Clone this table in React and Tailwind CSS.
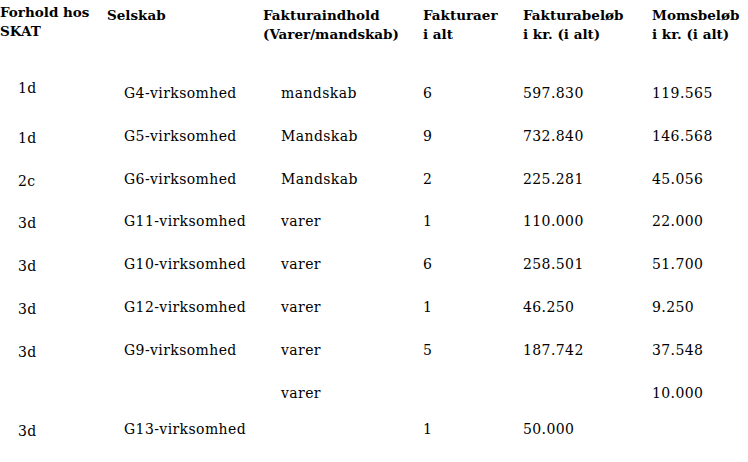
const cols = 'grid grid-cols-[107px_156px_160px_100px_129px_96px]';

const rows = [
  ['1d', 'G4-virksomhed', 'mandskab', '6', '597.830', '119.565', '-mt-[10px]'],
  ['1d', 'G5-virksomhed', 'Mandskab', '9', '732.840', '146.568', 'mt-[4px]'],
  ['2c', 'G6-virksomhed', 'Mandskab', '2', '225.281', '45.056', 'mt-[4px]'],
  ['3d', 'G11-virksomhed', 'varer', '1', '110.000', '22.000', 'mt-[4px]'],
  ['3d', 'G10-virksomhed', 'varer', '6', '258.501', '51.700', 'mt-[4px]'],
  ['3d', 'G12-virksomhed', 'varer', '1', '46.250', '9.250', 'mt-[4px]'],
  ['3d', 'G9-virksomhed', 'varer', '5', '187.742', '37.548', 'mt-[4px]'],
  ['', '', 'varer', '', '', '10.000', ''],
];

function App() {
  return (
    <div className="w-[748px] h-[462px] bg-white text-black overflow-hidden font-['DejaVu_Serif',serif] text-[14px] tracking-[0.4px]">
      <div className={`${cols} h-[72px] pt-[3px] font-bold text-[13.5px] leading-[19px] tracking-normal`}>
        <div>Forhold hos<br />SKAT</div>
        <div className="pt-[3px]">Selskab</div>
        <div className="pt-[3px]">Fakturaindhold<br />(Varer/mandskab)</div>
        <div className="pt-[3px]">Fakturaer<br />i alt</div>
        <div className="pt-[3px]">Fakturabeløb<br />i kr. (i alt)</div>
        <div className="pt-[3px]">Momsbeløb<br />i kr. (i alt)</div>
      </div>
      {rows.map((r, i) => (
        <div key={i} className={`${cols} h-[42.85px] items-center`}>
          <div className={`pl-[18px] ${r[6]}`}>{r[0]}</div>
          <div className="pl-[17px]">{r[1]}</div>
          <div className="pl-[18px]">{r[2]}</div>
          <div>{r[3]}</div>
          <div>{r[4]}</div>
          <div>{r[5]}</div>
        </div>
      ))}
      <div className={`${cols} h-[30px] items-center`}>
        <div className="pl-[18px] mt-[4px]">3d</div>
        <div className="pl-[17px]">G13-virksomhed</div>
        <div></div>
        <div>1</div>
        <div>50.000</div>
        <div></div>
      </div>
    </div>
  );
}

export default App;
